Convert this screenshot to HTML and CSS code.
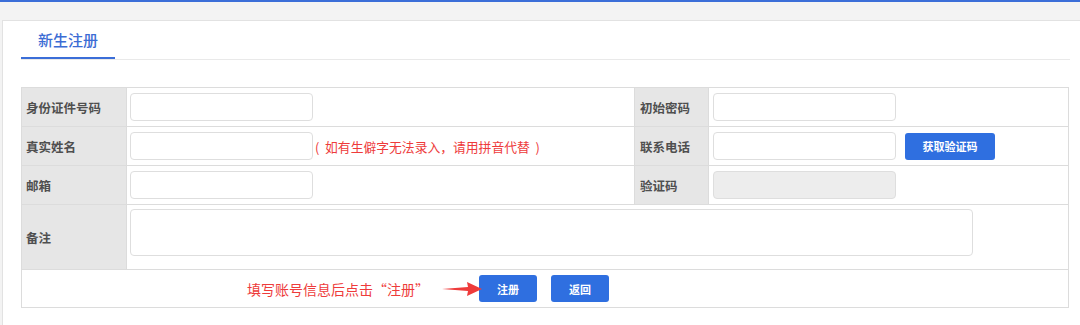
FILE: index.html
```html
<!DOCTYPE html>
<html lang="zh-CN">
<head>
<meta charset="utf-8">
<title>新生注册</title>
<link rel="stylesheet" href="styles.css">
</head>
<body>
<div class="topbar"></div>
<div class="page">
  <div class="card">
    <div class="tabs">
      <div class="tab">新生注册</div>
    </div>
    <table class="form">
      <colgroup>
        <col class="c-label1">
        <col class="c-value1">
        <col class="c-label2">
        <col class="c-value2">
      </colgroup>
      <tr class="row">
        <td class="label">身份证件号码</td>
        <td class="value"><input class="field" type="text"></td>
        <td class="label label-r">初始密码</td>
        <td class="value value-r"><input class="field" type="text"></td>
      </tr>
      <tr class="row">
        <td class="label">真实姓名</td>
        <td class="value"><div class="inline"><input class="field" type="text"><span class="hint">(&nbsp;&nbsp;如有生僻字无法录入，请用拼音代替&nbsp;&nbsp;)</span></div></td>
        <td class="label label-r">联系电话</td>
        <td class="value value-r"><div class="inline"><input class="field" type="text"><button class="btn btn-code" type="button">获取验证码</button></div></td>
      </tr>
      <tr class="row">
        <td class="label">邮箱</td>
        <td class="value"><input class="field" type="text"></td>
        <td class="label label-r">验证码</td>
        <td class="value value-r"><input class="field field-disabled" type="text" disabled></td>
      </tr>
      <tr class="row row-note">
        <td class="label">备注</td>
        <td class="value value-note" colspan="3"><textarea class="note"></textarea></td>
      </tr>
      <tr class="row row-actions">
        <td class="actions" colspan="4">
          <div class="callout">
            <span class="callout-text">填写账号信息后点击“注册”</span>
            <svg class="arrow" width="40" height="16" viewBox="0 0 40 16">
              <polygon points="0,8 26,6 25,1 40,8 25,15 26,10" fill="#ee3b3b"/>
            </svg>
          </div>
          <div class="btns">
            <button class="btn btn-act" type="button">注册</button>
            <button class="btn btn-act" type="button">返回</button>
          </div>
        </td>
      </tr>
    </table>
  </div>
</div>
</body>
</html>
```

FILE: styles.css
```css
html, body {
  margin: 0;
  padding: 0;
}
body {
  width: 1080px;
  height: 325px;
  overflow: hidden;
  background: #f3f3f3;
  font-family: "Noto Sans CJK SC", "Microsoft YaHei", sans-serif;
  color: #555;
}
.topbar {
  height: 2px;
  background: #3b6ed8;
}
.page {
  padding: 18px 0 0 2px;
}
.card {
  background: #fff;
  border: 1px solid #e2e2e2;
  border-right: none;
  border-bottom: none;
  height: 305px;
  padding-left: 18px;
}
.tabs {
  width: 1049px;
  border-bottom: 1px solid #e9e9e9;
  display: flex;
}
.tab {
  width: 94px;
  height: 36px;
  border-bottom: 2px solid #3b6ed8;
  display: flex;
  align-items: center;
  justify-content: center;
  font-size: 15px;
  color: #3b6cd4;
  font-weight: 500;
  line-height: 1;
}
.form {
  margin-top: 27px;
  width: 1047px;
  border-collapse: collapse;
  table-layout: fixed;
  font-size: 12.5px;
}
.c-label1 { width: 105px; }
.c-value1 { width: 508px; }
.c-label2 { width: 74px; }
.c-value2 { width: 360px; }
.form td {
  border: 1px solid #dcdcdc;
  padding: 0;
  height: 39px;
  box-sizing: border-box;
}
.row-note td { height: 65px; }
.row-actions td { height: 38px; }
.label {
  background: #e6e6e6;
  color: #4f4f4f;
  font-weight: bold;
  padding-left: 4px !important;
  vertical-align: middle;
}
.label-r {
  padding-left: 5px !important;
}
.value {
  padding: 0 4px 0 3px !important;
  vertical-align: middle;
}
.value-r {
  padding-left: 4px !important;
}
.inline {
  display: flex;
  align-items: center;
}
.field {
  display: block;
  box-sizing: border-box;
  width: 183px;
  height: 28px;
  border: 1px solid #dedede;
  border-radius: 4px;
  background: #fff;
  margin: 0;
  padding: 0 6px;
  font: inherit;
}
.field-disabled {
  background: #ededed;
}
.hint {
  color: #ee3b3b;
  font-size: 12.8px;
  white-space: nowrap;
  margin-left: 2px;
}
.btn {
  border: none;
  border-radius: 3px;
  background: #2f6fe0;
  color: #fff;
  font-family: inherit;
  font-size: 11px;
  font-weight: bold;
  padding: 0;
  cursor: pointer;
}
.btn-code {
  width: 90px;
  height: 27px;
  margin-left: 9px;
}
.value-note {
  vertical-align: top !important;
  padding-top: 4px !important;
}
.note {
  display: block;
  box-sizing: border-box;
  width: 843px;
  height: 47px;
  border: 1px solid #dedede;
  border-radius: 4px;
  resize: none;
  margin: 0;
}
.actions {
  position: relative;
  vertical-align: middle;
}
.btns {
  display: flex;
  justify-content: center;
  gap: 14px;
  padding-right: 2px;
}
.btn-act {
  width: 58px;
  height: 27px;
}
.callout {
  position: absolute;
  left: 225px;
  top: 0;
  bottom: 0;
  display: flex;
  align-items: center;
}
.callout-text {
  color: #ee3b3b;
  font-size: 14px;
  white-space: nowrap;
}
.arrow {
  margin-left: 13px;
  display: block;
}
```
